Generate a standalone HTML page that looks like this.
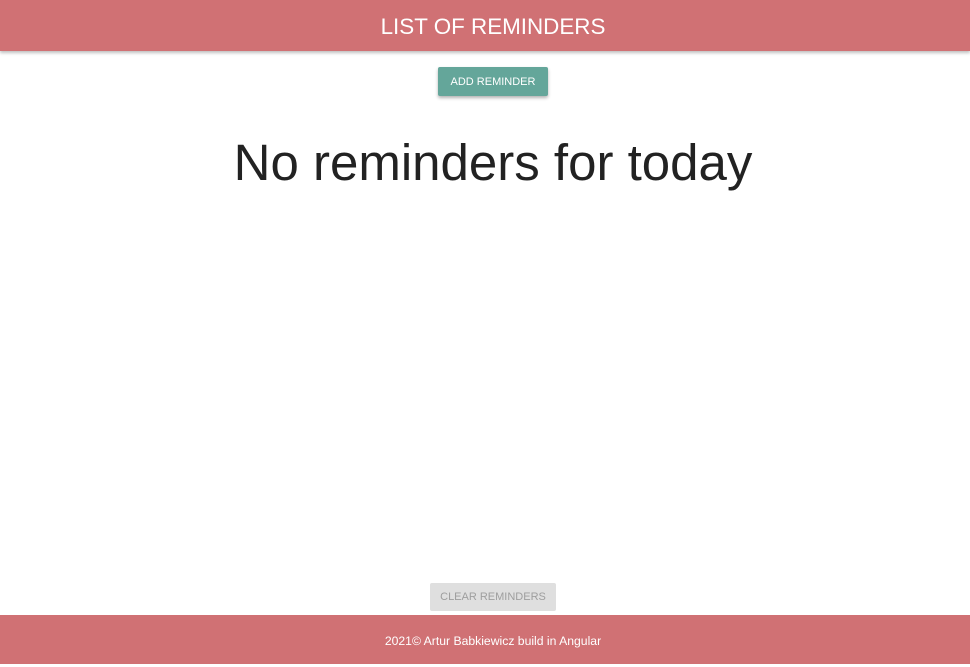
<!DOCTYPE html>
<html><head><style>
body{margin:0;width:970px;height:664px;position:relative;font-family:"Liberation Sans",sans-serif;background:#fff;overflow:hidden}
.hdr{position:absolute;left:0;top:0;width:970px;height:51px;background:#d07174;box-shadow:0 2px 3px rgba(0,0,0,.25)}
.hdr div{width:986px;color:#fff;font-size:22.4px;text-align:center;line-height:54px}
.add{position:absolute;left:438px;top:67px;width:110px;height:29px;background:#64a69a;color:#fff;font-size:11px;text-align:center;line-height:30px;border-radius:2px;box-shadow:0 2px 3px rgba(0,0,0,.3)}
h1{position:absolute;left:0;top:133px;width:986px;margin:0;text-align:center;font-weight:normal;font-size:51px;color:#222;line-height:60px}
.clr{position:absolute;left:430px;top:583px;width:126px;height:28px;background:#dfdfdf;color:#9e9e9e;font-size:11px;text-align:center;line-height:29px;border-radius:2px}
.ftr{position:absolute;left:0;top:615px;width:970px;height:49px;background:#d07174}
.ftr div{width:986px;color:#fff;font-size:12.2px;text-align:center;line-height:52px}
</style></head><body>
<div class="hdr"><div>LIST OF REMINDERS</div></div>
<div class="add">ADD REMINDER</div>
<h1>No reminders for today</h1>
<div class="clr">CLEAR REMINDERS</div>
<div class="ftr"><div>2021© Artur Babkiewicz build in Angular</div></div>
</body></html>
